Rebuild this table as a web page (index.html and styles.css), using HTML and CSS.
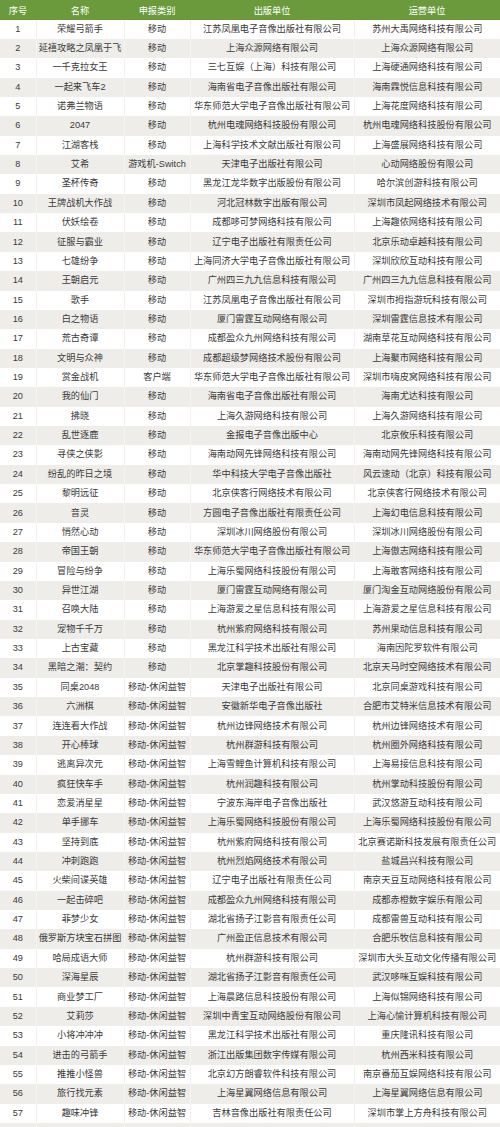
FILE: index.html
```html
<!DOCTYPE html>
<html lang="zh-CN">
<head>
<meta charset="utf-8">
<title>游戏审批</title>
<link rel="stylesheet" href="styles.css">
</head>
<body>
<table class="games">
<colgroup>
<col class="c-no"><col class="c-name"><col class="c-type"><col class="c-pub"><col class="c-op">
</colgroup>
<thead>
<tr><th>序号</th><th>名称</th><th>申报类别</th><th>出版单位</th><th>运营单位</th></tr>
</thead>
<tbody>
<tr><td>1</td><td>荣耀弓箭手</td><td>移动</td><td>江苏凤凰电子音像出版社有限公司</td><td>苏州大禹网络科技有限公司</td></tr>
<tr><td>2</td><td>延禧攻略之凤凰于飞</td><td>移动</td><td>上海众源网络有限公司</td><td>上海众源网络有限公司</td></tr>
<tr><td>3</td><td>一千克拉女王</td><td>移动</td><td>三七互娱（上海）科技有限公司</td><td>上海硬通网络科技有限公司</td></tr>
<tr><td>4</td><td>一起来飞车2</td><td>移动</td><td>海南省电子音像出版社有限公司</td><td>海南霖悦信息科技有限公司</td></tr>
<tr><td>5</td><td>诺弗兰物语</td><td>移动</td><td>华东师范大学电子音像出版社有限公司</td><td>上海花度网络科技有限公司</td></tr>
<tr><td>6</td><td>2047</td><td>移动</td><td>杭州电魂网络科技股份有限公司</td><td>杭州电魂网络科技股份有限公司</td></tr>
<tr><td>7</td><td>江湖客栈</td><td>移动</td><td>上海科学技术文献出版社有限公司</td><td>上海盛展网络科技有限公司</td></tr>
<tr><td>8</td><td>艾希</td><td>游戏机-Switch</td><td>天津电子出版社有限公司</td><td>心动网络股份有限公司</td></tr>
<tr><td>9</td><td>圣杯传奇</td><td>移动</td><td>黑龙江龙华数字出版股份有限公司</td><td>哈尔滨创游科技有限公司</td></tr>
<tr><td>10</td><td>王牌战机大作战</td><td>移动</td><td>河北冠林数字出版有限公司</td><td>深圳市凤起网络技术有限公司</td></tr>
<tr><td>11</td><td>伏妖绘卷</td><td>移动</td><td>成都哆可梦网络科技有限公司</td><td>上海趣侬网络科技有限公司</td></tr>
<tr><td>12</td><td>征服与霸业</td><td>移动</td><td>辽宁电子出版社有限责任公司</td><td>北京乐动卓越科技有限公司</td></tr>
<tr><td>13</td><td>七雄纷争</td><td>移动</td><td>上海同济大学电子音像出版社有限公司</td><td>深圳欣欣互动科技有限公司</td></tr>
<tr><td>14</td><td>王朝启元</td><td>移动</td><td>广州四三九九信息科技有限公司</td><td>广州四三九九信息科技有限公司</td></tr>
<tr><td>15</td><td>歌手</td><td>移动</td><td>江苏凤凰电子音像出版社有限公司</td><td>深圳市拇指游玩科技有限公司</td></tr>
<tr><td>16</td><td>白之物语</td><td>移动</td><td>厦门雷霆互动网络有限公司</td><td>深圳雷霆信息技术有限公司</td></tr>
<tr><td>17</td><td>荒古奇谭</td><td>移动</td><td>成都盈众九州网络科技有限公司</td><td>湖南草花互动网络科技有限公司</td></tr>
<tr><td>18</td><td>文明与众神</td><td>移动</td><td>成都超级梦网络技术股份有限公司</td><td>上海聚市网络科技有限公司</td></tr>
<tr><td>19</td><td>赏金战机</td><td>客户端</td><td>华东师范大学电子音像出版社有限公司</td><td>深圳市嗨皮窝网络科技有限公司</td></tr>
<tr><td>20</td><td>我的仙门</td><td>移动</td><td>海南省电子音像出版社有限公司</td><td>海南尤达科技有限公司</td></tr>
<tr><td>21</td><td>拂晓</td><td>移动</td><td>上海久游网络科技有限公司</td><td>上海久游网络科技有限公司</td></tr>
<tr><td>22</td><td>乱世逐鹿</td><td>移动</td><td>金报电子音像出版中心</td><td>北京攸乐科技有限公司</td></tr>
<tr><td>23</td><td>寻侠之侠影</td><td>移动</td><td>海南动网先锋网络科技有限公司</td><td>海南动网先锋网络科技有限公司</td></tr>
<tr><td>24</td><td>纷乱的昨日之境</td><td>移动</td><td>华中科技大学电子音像出版社</td><td>风云速动（北京）科技有限公司</td></tr>
<tr><td>25</td><td>黎明远征</td><td>移动</td><td>北京侠客行网络技术有限公司</td><td>北京侠客行网络技术有限公司</td></tr>
<tr><td>26</td><td>音灵</td><td>移动</td><td>方圆电子音像出版社有限责任公司</td><td>上海幻电信息科技有限公司</td></tr>
<tr><td>27</td><td>悄然心动</td><td>移动</td><td>深圳冰川网络股份有限公司</td><td>深圳冰川网络股份有限公司</td></tr>
<tr><td>28</td><td>帝国王朝</td><td>移动</td><td>华东师范大学电子音像出版社有限公司</td><td>上海傲志网络科技有限公司</td></tr>
<tr><td>29</td><td>冒险与纷争</td><td>移动</td><td>上海乐蜀网络科技股份有限公司</td><td>上海敢客网络科技有限公司</td></tr>
<tr><td>30</td><td>异世江湖</td><td>移动</td><td>厦门雷霆互动网络有限公司</td><td>厦门淘金互动网络股份有限公司</td></tr>
<tr><td>31</td><td>召唤大陆</td><td>移动</td><td>上海游爱之星信息科技有限公司</td><td>上海游爱之星信息科技有限公司</td></tr>
<tr><td>32</td><td>宠物千千万</td><td>移动</td><td>杭州紫府网络科技有限公司</td><td>苏州果动信息科技有限公司</td></tr>
<tr><td>33</td><td>上古宝藏</td><td>移动</td><td>黑龙江科学技术出版社有限公司</td><td>海南因陀罗软件有限公司</td></tr>
<tr><td>34</td><td>黑暗之潮：契约</td><td>移动</td><td>北京掌趣科技股份有限公司</td><td>北京天马时空网络技术有限公司</td></tr>
<tr><td>35</td><td>同桌2048</td><td>移动-休闲益智</td><td>天津电子出版社有限公司</td><td>北京同桌游戏科技有限公司</td></tr>
<tr><td>36</td><td>六洲棋</td><td>移动-休闲益智</td><td>安徽新华电子音像出版社</td><td>合肥市艾特米信息技术有限公司</td></tr>
<tr><td>37</td><td>连连看大作战</td><td>移动-休闲益智</td><td>杭州边锋网络技术有限公司</td><td>杭州边锋网络技术有限公司</td></tr>
<tr><td>38</td><td>开心棒球</td><td>移动-休闲益智</td><td>杭州群游科技有限公司</td><td>杭州圈外网络科技有限公司</td></tr>
<tr><td>39</td><td>逃离异次元</td><td>移动-休闲益智</td><td>上海雪鲤鱼计算机科技有限公司</td><td>上海易接信息科技有限公司</td></tr>
<tr><td>40</td><td>疯狂快车手</td><td>移动-休闲益智</td><td>杭州润趣科技有限公司</td><td>杭州掌动科技股份有限公司</td></tr>
<tr><td>41</td><td>恋爱消星星</td><td>移动-休闲益智</td><td>宁波东海岸电子音像出版社</td><td>武汉悠游互动科技有限公司</td></tr>
<tr><td>42</td><td>单手挪车</td><td>移动-休闲益智</td><td>上海乐蜀网络科技股份有限公司</td><td>上海乐蜀网络科技股份有限公司</td></tr>
<tr><td>43</td><td>坚持到底</td><td>移动-休闲益智</td><td>杭州紫府网络科技有限公司</td><td>北京赛诺斯科技发展有限责任公司</td></tr>
<tr><td>44</td><td>冲刺跑跑</td><td>移动-休闲益智</td><td>杭州烈焰网络技术有限公司</td><td>盐城昌兴科技有限公司</td></tr>
<tr><td>45</td><td>火柴间谍英雄</td><td>移动-休闲益智</td><td>辽宁电子出版社有限责任公司</td><td>南京天豆互动网络科技有限公司</td></tr>
<tr><td>46</td><td>一起击碎吧</td><td>移动-休闲益智</td><td>成都盈众九州网络科技有限公司</td><td>成都赤橙数字娱乐有限公司</td></tr>
<tr><td>47</td><td>菲梦少女</td><td>移动-休闲益智</td><td>湖北省扬子江影音有限责任公司</td><td>成都雷兽互动科技有限公司</td></tr>
<tr><td>48</td><td>俄罗斯方块宝石拼图</td><td>移动-休闲益智</td><td>广州盈正信息技术有限公司</td><td>合肥乐牧信息科技有限公司</td></tr>
<tr><td>49</td><td>哈局成语大师</td><td>移动-休闲益智</td><td>杭州群游科技有限公司</td><td>深圳市大头互动文化传播有限公司</td></tr>
<tr><td>50</td><td>深海星辰</td><td>移动-休闲益智</td><td>湖北省扬子江影音有限责任公司</td><td>武汉哆咪互娱科技有限公司</td></tr>
<tr><td>51</td><td>商业梦工厂</td><td>移动-休闲益智</td><td>上海晨路信息科技股份有限公司</td><td>上海似锦网络科技有限公司</td></tr>
<tr><td>52</td><td>艾莉莎</td><td>移动-休闲益智</td><td>深圳中青宝互动网络股份有限公司</td><td>上海心愉计算机科技有限公司</td></tr>
<tr><td>53</td><td>小将冲冲冲</td><td>移动-休闲益智</td><td>黑龙江科学技术出版社有限公司</td><td>重庆隆讯科技有限公司</td></tr>
<tr><td>54</td><td>进击的弓箭手</td><td>移动-休闲益智</td><td>浙江出版集团数字传媒有限公司</td><td>杭州西米科技有限公司</td></tr>
<tr><td>55</td><td>推推小怪兽</td><td>移动-休闲益智</td><td>北京幻方朗睿软件科技有限公司</td><td>南京番茄互娱网络科技有限公司</td></tr>
<tr><td>56</td><td>旅行找元素</td><td>移动-休闲益智</td><td>上海星翼网络信息有限公司</td><td>上海星翼网络信息有限公司</td></tr>
<tr><td>57</td><td>趣味冲锋</td><td>移动-休闲益智</td><td>吉林音像出版社有限责任公司</td><td>深圳市掌上方舟科技有限公司</td></tr>
<tr class="cut"><td></td><td></td><td></td><td></td><td></td></tr>
</tbody>
</table>
</body>
</html>
```
FILE: styles.css
```css
html, body {
  margin: 0;
  padding: 0;
  background: #ffffff;
}
body {
  font-family: "Liberation Sans", "Noto Sans CJK SC", sans-serif;
  color: #3a3a3a;
  overflow: hidden;
}
.games {
  width: 500px;
  border-collapse: collapse;
  table-layout: fixed;
  font-size: 9.2px;
}
.c-no { width: 36px; }
.c-name { width: 88px; }
.c-type { width: 66px; }
.c-pub { width: 164px; }
.c-op { width: 146px; }
.games th {
  background: #6b9a3d;
  color: #ffffff;
  font-weight: normal;
  height: 19.5px;
  padding: 0;
  text-align: center;
  white-space: nowrap;
}
.games td {
  height: 19.36px;
  padding: 0;
  text-align: center;
  white-space: nowrap;
  overflow: hidden;
  line-height: 1;
  border-left: 1px solid #f2f1ef;
}
.games td:first-child { border-left: none; }
.games tbody tr:nth-child(even) td {
  background: #efedea;
  border-left-color: #f5f4f2;
}
.games tr.cut td { height: 19.36px; }
```
